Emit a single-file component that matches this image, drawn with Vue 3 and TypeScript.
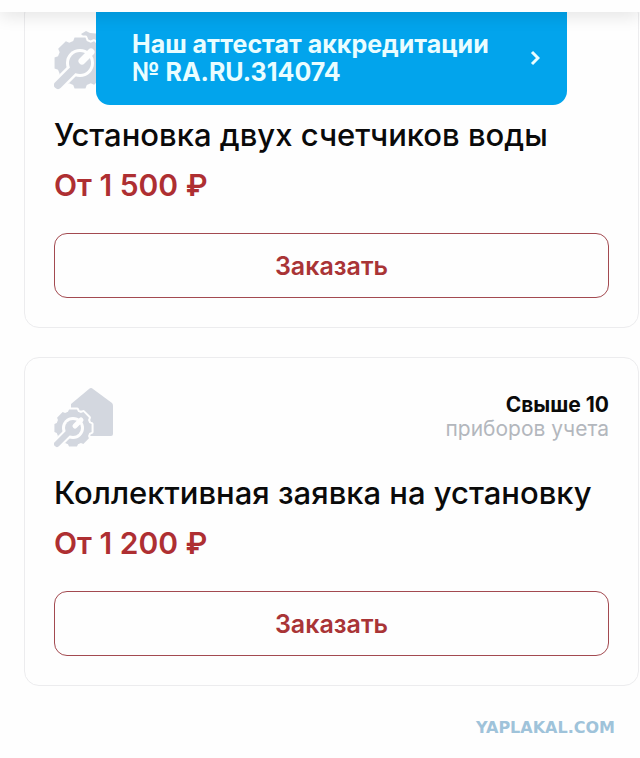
<script setup lang="ts">
interface Service {
  id: string
  title: string
  price: string
  icon: 'gears' | 'house'
  amount?: string
  unit?: string
}

const services: Service[] = [
  { id: 'two', title: 'Установка двух счетчиков воды', price: 'От 1 500 ₽', icon: 'gears' },
  {
    id: 'group',
    title: 'Коллективная заявка на установку',
    price: 'От 1 200 ₽',
    icon: 'house',
    amount: 'Свыше 10',
    unit: 'приборов учета',
  },
]

// Outline of a cog with eight flat teeth.
function cog(cx: number, cy: number, outer: number, inner: number): string {
  const points: string[] = []
  for (let i = 0; i < 8; i++) {
    const mid = (i * Math.PI) / 4
    const steps: [number, number][] = [
      [-0.3, inner],
      [-0.21, outer],
      [0.21, outer],
      [0.3, inner],
    ]
    for (const [offset, r] of steps) {
      points.push(`${(cx + r * Math.cos(mid + offset)).toFixed(2)} ${(cy + r * Math.sin(mid + offset)).toFixed(2)}`)
    }
  }
  return `M${points.join('L')}Z`
}

const largeCog = cog(26, 33, 26, 23)
const smallCog = cog(19, 40, 19, 17)
</script>

<template>
  <div class="page">
    <header class="topbar"></header>
    <a class="banner" href="#accreditation">
      <span>Наш аттестат аккредитации<br />№ RA.RU.314074</span>
      <svg class="chevron" viewBox="0 0 10 16" aria-hidden="true">
        <path d="M2 2L8 8L2 14" />
      </svg>
    </a>

    <main class="list">
      <article v-for="service in services" :key="service.id" class="card">
        <div class="head">
          <svg v-if="service.icon === 'gears'" class="icon" viewBox="0 0 60 60" aria-hidden="true">
            <path class="fill" d="M27 4L32 1L36 3L48 4V20L38 12L31 8Z" />
            <path class="fill edge" :d="largeCog" />
            <circle class="hole" cx="26" cy="33" r="14" />
            <path class="handle-edge" d="M4 55L20 39" />
            <path class="handle" d="M4 55L20 39" />
            <circle class="fill" cx="26" cy="33" r="11" />
            <path class="slot" d="M28 31L37 22" />
          </svg>
          <svg v-else class="icon" viewBox="0 0 60 60" aria-hidden="true">
            <path class="fill" d="M17 16L35 1Q37 -1 39 1L58 15Q59 16 59 18V46Q59 48 57 48H17Z" />
            <path class="fill edge" :d="smallCog" />
            <circle class="hole" cx="19" cy="40" r="11" />
            <path class="handle-edge thin" d="M3 56L15 44" />
            <path class="handle thin" d="M3 56L15 44" />
            <circle class="fill" cx="19" cy="40" r="8" />
            <path class="slot thin" d="M21 38L27 32" />
          </svg>
          <p v-if="service.amount" class="amount">
            <strong>{{ service.amount }}</strong>
            <span>{{ service.unit }}</span>
          </p>
        </div>
        <h2 class="title">{{ service.title }}</h2>
        <p class="price">{{ service.price }}</p>
        <button class="order" type="button">Заказать</button>
      </article>
    </main>

    <footer class="mark">YAPLAKAL.COM</footer>
  </div>
</template>

<style>
body {
  margin: 0;
  background: #fefefe;
}
</style>

<style scoped>
.page {
  position: relative;
  display: flex;
  flex-direction: column;
  min-height: 100vh;
  overflow: hidden;
  font-family: Inter, "Open Sans", "Liberation Sans", sans-serif;
  color: #0a0a0a;
}
.topbar {
  position: absolute;
  inset: 0 0 auto;
  z-index: 2;
  height: 12px;
  background: #fefefe;
  box-shadow: 0 2px 18px rgba(0, 0, 0, 0.15);
}
.banner {
  position: absolute;
  top: 0;
  left: 15%;
  right: 73px;
  z-index: 1;
  display: flex;
  align-items: center;
  justify-content: space-between;
  box-sizing: border-box;
  height: 105px;
  padding: 10px 27px 0 36px;
  border-radius: 0 0 14px 14px;
  background: #02a4ec;
  color: #e9fdff;
  font-size: 25px;
  font-weight: 700;
  line-height: 28px;
  text-decoration: none;
}
.chevron {
  width: 10px;
  height: 16px;
  fill: none;
  stroke: currentColor;
  stroke-width: 3;
}
.list {
  display: flex;
  flex-direction: column;
  gap: 29px;
  margin-top: -1px;
  padding: 0 1px 0 24px;
}
.card {
  padding: 30px 29px 29px;
  border: 1px solid #ececee;
  border-radius: 15px;
}
.head {
  display: flex;
  justify-content: space-between;
  height: 60px;
}
.icon {
  width: 60px;
  height: 60px;
}
.fill {
  fill: #d3d7df;
}
.edge {
  stroke: #fefefe;
  stroke-width: 4;
  stroke-linejoin: round;
  paint-order: stroke;
}
.hole {
  fill: #fefefe;
}
.handle,
.handle-edge,
.slot {
  fill: none;
  stroke-linecap: round;
}
.handle {
  stroke: #d3d7df;
  stroke-width: 8;
}
.handle-edge {
  stroke: #fefefe;
  stroke-width: 13;
}
.slot {
  stroke: #fefefe;
  stroke-width: 7;
}
.handle.thin {
  stroke-width: 6;
}
.handle-edge.thin {
  stroke-width: 10;
}
.slot.thin {
  stroke-width: 5;
}
.amount {
  display: flex;
  flex-direction: column;
  margin: 5px 0 0;
  font-size: 21px;
  line-height: 24px;
  text-align: right;
}
.amount strong {
  font-weight: 700;
}
.amount span {
  color: #b3b7bd;
}
.title {
  margin: 27px 0 0;
  font-size: 31px;
  font-weight: 500;
  line-height: 36px;
}
.price {
  margin: 14px 0 0;
  color: #ae2f32;
  font-size: 30px;
  font-weight: 600;
  line-height: 36px;
}
.order {
  display: block;
  width: 100%;
  height: 65px;
  margin: 30px 0 0;
  border: 1px solid #a34a50;
  border-radius: 13px;
  background: none;
  color: #a93436;
  font: 600 25px/28px Inter, "Open Sans", "Liberation Sans", sans-serif;
}
.mark {
  margin: 32px 25px 0 0;
  color: #9fc3da;
  font-family: "DejaVu Sans", sans-serif;
  font-size: 16px;
  font-weight: 700;
  line-height: 20px;
  text-align: right;
}
</style>
